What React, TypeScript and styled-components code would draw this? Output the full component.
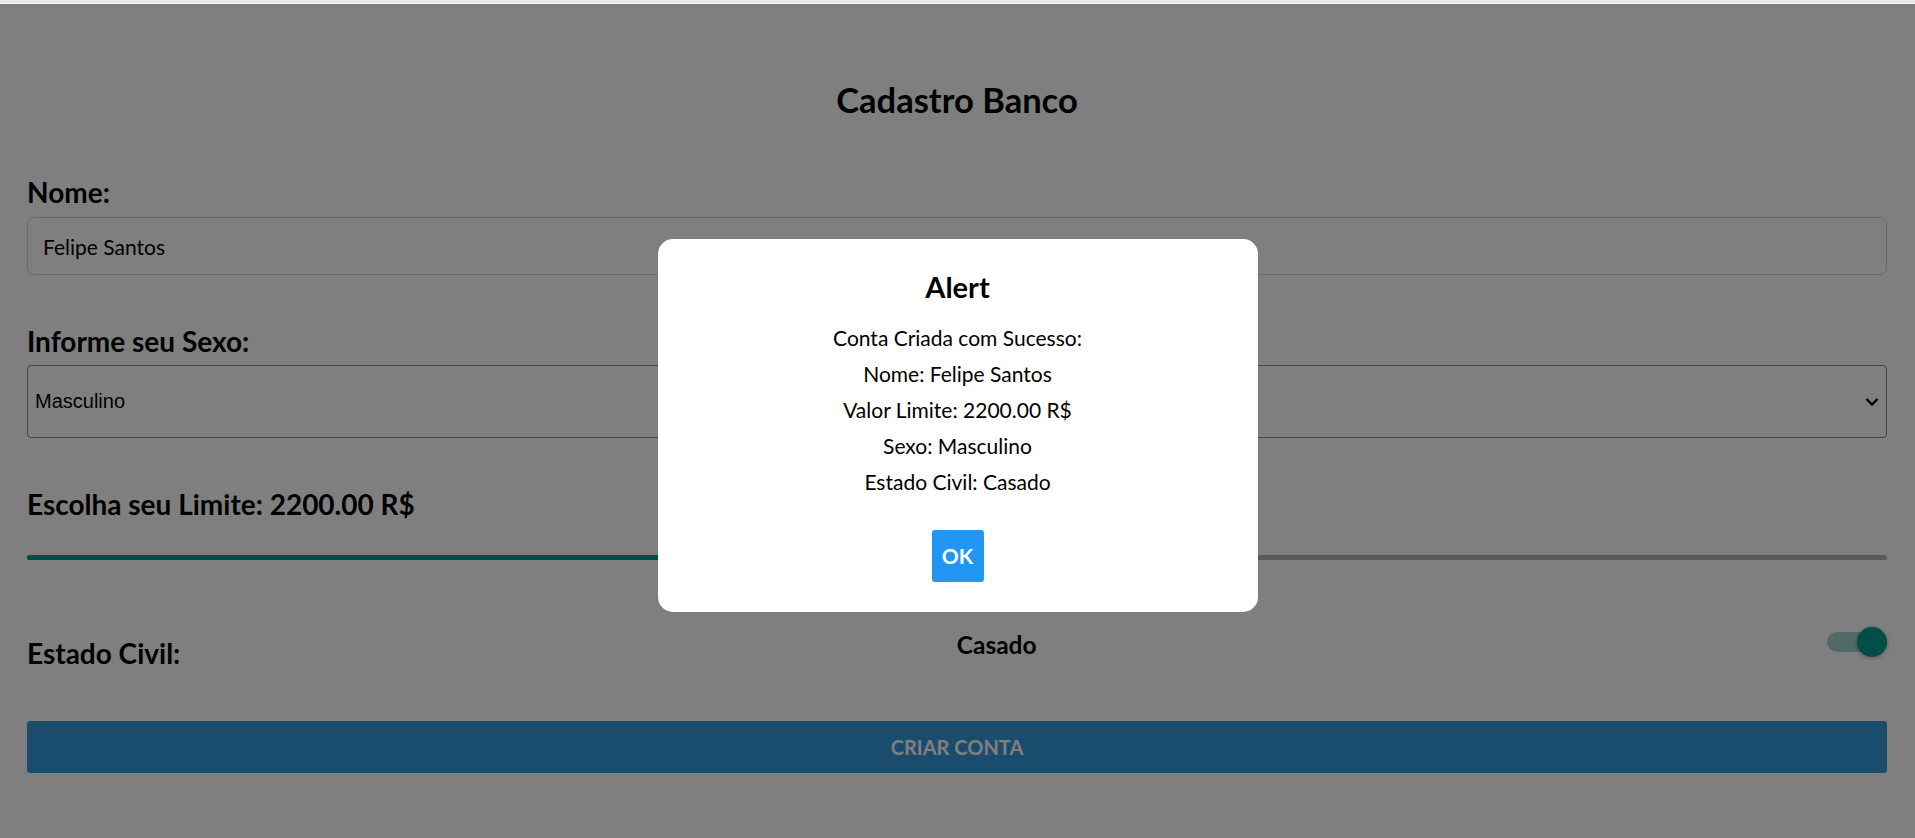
import React from "react";
import styled, { createGlobalStyle } from "styled-components";

const GlobalStyle = createGlobalStyle`
  html, body { margin: 0; padding: 0; background: #ffffff; }
  body { font-family: "Lato", "Segoe UI", sans-serif; color: #000; }
  * { box-sizing: border-box; }
`;

const TopStrip = styled.div`
  height: 4px;
  background: #e8e8e8;
  border-bottom: 1px solid #f4f4f4;
`;

const Page = styled.div`
  display: flex;
  flex-direction: column;
  padding: 0 28px 0 27px;
  min-height: 834px;
`;

const Title = styled.h1`
  margin: 76px 0 0;
  font-size: 34.5px;
  line-height: 40px;
  font-weight: 700;
  text-align: center;
`;

const Label = styled.div<{ $top: number }>`
  margin-top: ${(p) => p.$top}px;
  font-size: 28px;
  line-height: 36px;
  font-weight: 700;
`;

const TextInput = styled.div`
  margin-top: 7px;
  height: 58px;
  border: 1px solid #d4d4d4;
  border-radius: 7px;
  display: flex;
  align-items: center;
  padding: 0 15px;
  font-size: 21px;
`;

const SelectBox = styled.div`
  position: relative;
  margin-top: 6px;
  height: 73px;
  border: 1px solid #888888;
  border-radius: 4px;
  display: flex;
  align-items: center;
  padding: 0 7px;
  font-family: "Liberation Sans", Arial, sans-serif;
  font-size: 20px;
`;

const Chevron = styled.svg`
  position: absolute;
  right: 7px;
  top: 50%;
  transform: translateY(-50%);
`;

const SliderWrap = styled.div`
  position: relative;
  margin-top: 20px;
  height: 30px;
  display: flex;
  align-items: center;
`;

const Track = styled.div`
  flex: 1;
  height: 5px;
  border-radius: 3px;
  background: #b4b4b4;
  overflow: hidden;
  display: flex;
`;

const TrackFill = styled.div`
  height: 100%;
  background: #009e8c;
`;

const Thumb = styled.div`
  position: absolute;
  top: 50%;
  width: 30px;
  height: 30px;
  margin-left: -15px;
  border-radius: 50%;
  background: #009e8c;
  transform: translateY(-50%);
`;

const CivilRow = styled.div`
  margin-top: 52px;
  display: flex;
  justify-content: space-between;
  align-items: flex-start;
`;

const CivilLabel = styled.div`
  margin-top: 11px;
  font-size: 28px;
  line-height: 36px;
  font-weight: 700;
`;

const CivilValue = styled.div`
  margin-top: 5px;
  margin-right: 14px;
  font-size: 24.5px;
  line-height: 32px;
  font-weight: 700;
`;

const Switch = styled.div`
  margin-top: 3px;
  width: 60px;
  height: 30px;
  display: flex;
  align-items: center;
  position: relative;
`;

const SwitchTrack = styled.div`
  width: 100%;
  height: 20px;
  border-radius: 10px;
  background: #a3d3cf;
`;

const SwitchThumb = styled.div`
  position: absolute;
  right: 0;
  top: 0;
  width: 30px;
  height: 30px;
  border-radius: 50%;
  background: #009e8c;
  box-shadow: 0 1px 4px rgba(0, 0, 0, 0.35);
`;

const SubmitButton = styled.button`
  margin-top: 50px;
  height: 52px;
  border: none;
  border-radius: 3px;
  background: #3498db;
  color: #ffffff;
  font-family: "Lato", "Segoe UI", sans-serif;
  font-size: 20px;
  font-weight: 700;
  text-transform: uppercase;
`;

const Overlay = styled.div`
  position: fixed;
  left: 0;
  right: 0;
  top: 4px;
  bottom: 0;
  background: rgba(0, 0, 0, 0.5);
  display: flex;
  align-items: center;
  justify-content: center;
  padding-top: 8px;
`;

const Dialog = styled.div`
  width: 600px;
  background: #ffffff;
  border-radius: 15px;
  padding: 30px;
  display: flex;
  flex-direction: column;
  align-items: center;
`;

const DialogTitle = styled.div`
  font-size: 29px;
  line-height: 36px;
  font-weight: 700;
  margin-bottom: 15px;
`;

const DialogLine = styled.div`
  font-size: 21px;
  line-height: 36px;
`;

const OkButton = styled.button`
  margin-top: 30px;
  width: 52px;
  height: 52px;
  border: none;
  border-radius: 3px;
  background: #2196f3;
  color: #ffffff;
  font-family: "Lato", "Segoe UI", sans-serif;
  font-size: 21px;
  font-weight: 700;
  padding: 0;
`;

const lines = [
  "Conta Criada com Sucesso:",
  "Nome: Felipe Santos",
  "Valor Limite: 2200.00 R$",
  "Sexo: Masculino",
  "Estado Civil: Casado",
];

export default function App() {
  const fraction = 0.45;
  return (
    <>
      <GlobalStyle />
      <TopStrip />
      <Page>
        <Title>Cadastro Banco</Title>
        <Label $top={54}>Nome:</Label>
        <TextInput>Felipe Santos</TextInput>
        <Label $top={48}>Informe seu Sexo:</Label>
        <SelectBox>
          Masculino
          <Chevron width="14" height="9" viewBox="0 0 14 9">
            <path d="M1.5 1.5 L7 7 L12.5 1.5" fill="none" stroke="#000" strokeWidth="2.4" />
          </Chevron>
        </SelectBox>
        <Label $top={48}>Escolha seu Limite: 2200.00 R$</Label>
        <SliderWrap>
          <Track>
            <TrackFill style={{ width: `${fraction * 100}%` }} />
          </Track>
          <Thumb style={{ left: `${fraction * 100}%` }} />
        </SliderWrap>
        <CivilRow>
          <CivilLabel>Estado Civil:</CivilLabel>
          <CivilValue>Casado</CivilValue>
          <Switch>
            <SwitchTrack />
            <SwitchThumb />
          </Switch>
        </CivilRow>
        <SubmitButton>Criar Conta</SubmitButton>
      </Page>
      <Overlay>
        <Dialog>
          <DialogTitle>Alert</DialogTitle>
          {lines.map((l) => (
            <DialogLine key={l}>{l}</DialogLine>
          ))}
          <OkButton>OK</OkButton>
        </Dialog>
      </Overlay>
    </>
  );
}
